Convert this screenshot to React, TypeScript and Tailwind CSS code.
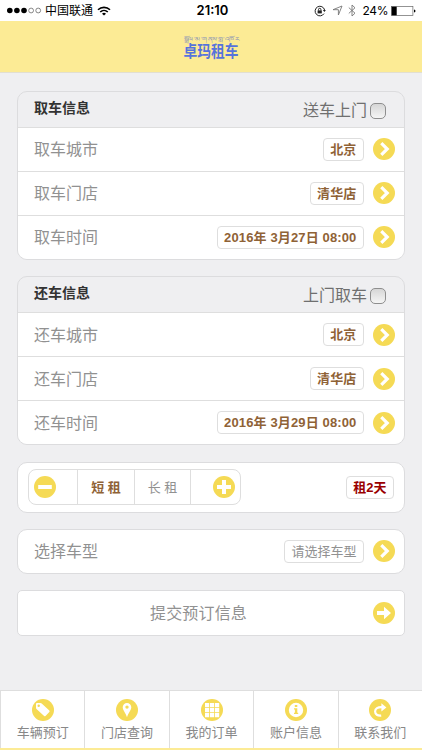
import { useState, type ReactNode } from "react";

function Badge({ children }: { children: ReactNode }) {
  return (
    <span className="h-[22px] w-[22px] shrink-0 rounded-full bg-[#f5da55]">
      <svg viewBox="0 0 22 22" className="block h-full w-full" fill="white">
        {children}
      </svg>
    </span>
  );
}

function Chevron() {
  return (
    <Badge>
      <path d="M8.3 5.2 14.2 11l-5.9 5.8" fill="none" stroke="white" strokeWidth="3.2" />
    </Badge>
  );
}

function Pill({ children, className }: { children: ReactNode; className: string }) {
  return (
    <span
      className={`flex h-[23px] items-center whitespace-pre rounded border border-[#dedede] px-[6.5px] text-[13px] leading-none ${className}`}
    >
      {children}
    </span>
  );
}

type Row = { label: string; value: string };

function Section({
  title,
  option,
  rows,
  className,
}: {
  title: string;
  option: string;
  rows: Row[];
  className: string;
}) {
  const [checked, setChecked] = useState(false);

  return (
    <section
      className={`h-[169px] shrink-0 overflow-hidden rounded-[10px] border border-[#dcdcde] bg-[#efeff1] ${className}`}
    >
      <header className="flex h-[35px] items-center justify-between pl-4 pr-[18px]">
        <h2 className="pb-[2px] text-[14px] font-bold text-[#333]">{title}</h2>
        <label className="flex items-center gap-[3px] pt-[2px] text-[16px] text-[#6f6f6f]">
          {option}
          <input
            type="checkbox"
            checked={checked}
            onChange={() => setChecked(!checked)}
            className="h-4 w-4 appearance-none rounded-[5px] border border-[#8e8e8e] bg-linear-to-b from-[#d6d6d6] to-[#f5f5f5]"
          />
        </label>
      </header>
      {rows.map((row) => (
        <div
          key={row.label}
          className="flex h-11 items-center border-t border-[#dedede] bg-white pb-[.5px] pl-4 pr-[9px]"
        >
          <span className="flex-1 pt-[2px] text-[16px] text-[#919191]">{row.label}</span>
          <Pill className="mr-[9px] font-bold tracking-[.14px] text-[#8f6236]">{row.value}</Pill>
          <Chevron />
        </div>
      ))}
    </section>
  );
}

function StatusBar() {
  return (
    <div className="flex h-[21px] items-center bg-white text-black">
      <div className="flex flex-1 items-center pl-[7px]">
        <svg viewBox="0 0 35 7" className="h-[7px] w-[35px]">
          <circle cx="2.8" cy="3.5" r="2.8" />
          <circle cx="9.9" cy="3.5" r="2.8" />
          <circle cx="17" cy="3.5" r="2.8" />
          <circle cx="24.1" cy="3.5" r="2.4" fill="none" stroke="#555" strokeWidth=".7" />
          <circle cx="31.2" cy="3.5" r="2.4" fill="none" stroke="#555" strokeWidth=".7" />
        </svg>
        <span className="ml-[3px] text-[12px]">中国联通</span>
        <svg viewBox="0 0 14 10" className="ml-1 h-[10px] w-[14px]" fill="none" stroke="black" strokeWidth="1.6">
          <path d="M1 3.8a8.6 8.6 0 0 1 12 0M3.2 6a5.5 5.5 0 0 1 7.6 0" />
          <path d="M7 9.6 5 7.7a3 3 0 0 1 4 0z" fill="black" stroke="none" />
        </svg>
      </div>
      <span className="relative left-px font-[Inter] text-[13px] font-semibold leading-none">21:10</span>
      <div className="flex flex-1 items-center justify-end pr-[6px]">
        <svg viewBox="0 0 12 12" className="h-3 w-3" fill="none" stroke="#222" strokeWidth="1">
          <path d="M10.6 5a4.8 4.8 0 1 0-.6 3.6" />
          <path d="M8.9 5h3l-1.5 2z" fill="#222" stroke="none" />
          <path d="M3.6 5.4h4.2v3H3.6z" fill="#222" stroke="none" />
          <path d="M4.5 5.5v-1a1.2 1.2 0 0 1 2.4 0v1" />
        </svg>
        <svg viewBox="0 0 11 11" className="ml-[6px] h-[11px] w-[11px]" fill="none" stroke="#777" strokeWidth=".9">
          <path d="M10 1 6.4 10V4.7H1z" strokeLinejoin="round" />
        </svg>
        <svg viewBox="0 0 8 13" className="ml-[5px] h-[13px] w-2" fill="none" stroke="#777" strokeWidth=".9">
          <path d="m.8 3.6 6.2 5.6L4 12V1l3 2.8L.8 9.4" />
        </svg>
        <span className="ml-[7px] font-[Inter] text-[12px] leading-none tracking-[-.4px]">24%</span>
        <svg viewBox="0 0 25 10" className="ml-[3px] h-[10px] w-[25px]">
          <rect x=".5" y=".5" width="21.4" height="9" fill="white" stroke="#666" strokeWidth=".7" />
          <rect x=".7" y=".7" width="5" height="8.6" />
          <path d="M23 3.4q1.5.3 1.5 1.6T23 6.6z" />
        </svg>
      </div>
    </div>
  );
}

function Logo() {
  return (
    <div className="flex w-[56px] flex-col items-center text-[#5673dc]">
      <span className="h-[5px] scale-x-[1.4] whitespace-nowrap text-[5px] leading-[5px] text-[#7f8cb8]">
        སྒྲོལ་མ་གནས་གླ་འཁོར
      </span>
      <span className="scale-y-[1.2] pt-px text-[13.7px] font-bold leading-[18px]">卓玛租车</span>
    </div>
  );
}

const tabs: { label: string; icon: ReactNode }[] = [
  {
    label: "车辆预订",
    icon: (
      <>
        <path d="M4 5.1q0-1 1-1h3.5q.7 0 1.2.5l7.6 6.9q.7.7 0 1.4l-3.8 4q-.7.7-1.4 0L4.5 10q-.5-.5-.5-1.2z" />
        <circle cx="6.7" cy="6.8" r="1.2" fill="#f5da55" />
      </>
    ),
  },
  {
    label: "门店查询",
    icon: (
      <>
        <path d="M11 3.9a4.3 4.3 0 0 1 4.3 4.3C15.3 11 12.2 14 11 18.2 9.8 14 6.7 11 6.7 8.2A4.3 4.3 0 0 1 11 3.9z" />
        <circle cx="11" cy="8.1" r="1.7" fill="#f5da55" />
      </>
    ),
  },
  {
    label: "我的订单",
    icon: (
      <path d="M4 4h4.2v4.2H4zM9 4h4.2v4.2H9zM14 4h4.2v4.2H14zM4 9h4.2v4.2H4zM9 9h4.2v4.2H9zM14 9h4.2v4.2H14zM4 14h4.2v4.2H4zM9 14h4.2v4.2H9zM14 14h4.2v4.2H14z" />
    ),
  },
  {
    label: "账户信息",
    icon: (
      <>
        <circle cx="11" cy="11" r="7.2" />
        <path d="M9.8 6h2.5v2H9.8zM9 9.2h3.3v4.6h.9v1.3H9v-1.3h.9v-3.300H9z" fill="#f5da55" />
      </>
    ),
  },
  {
    label: "联系我们",
    icon: (
      <>
        <path d="M12.2 16.6c-3.6.4-6.1-1.3-6.1-4 0-3 2.7-4.7 7-4.5" fill="none" stroke="white" strokeWidth="2.2" />
        <path d="m12.4 4.3 5 4.1-5 4.1z" />
      </>
    ),
  },
];

const pickup: Row[] = [
  { label: "取车城市", value: "北京" },
  { label: "取车门店", value: "清华店" },
  { label: "取车时间", value: "2016年 3月27日 08:00" },
];

const giveBack: Row[] = [
  { label: "还车城市", value: "北京" },
  { label: "还车门店", value: "清华店" },
  { label: "还车时间", value: "2016年 3月29日 08:00" },
];

export default function App() {
  const [term, setTerm] = useState<"short" | "long">("short");

  return (
    <div className="flex h-[750px] w-[422px] flex-col overflow-hidden bg-[#efeff1] font-['Liberation_Sans','Noto_Sans_CJK_SC',sans-serif]">
      <StatusBar />
      <header className="flex h-[52px] justify-center border-b border-[#e2dfd0] bg-[#fceb95] pt-4">
        <Logo />
      </header>

      <main className="flex flex-1 flex-col px-[17px] pt-[18px]">
        <Section title="取车信息" option="送车上门" rows={pickup} className="" />
        <Section title="还车信息" option="上门取车" rows={giveBack} className="mt-[16.4px]" />

        <div className="mt-[16.6px] flex h-[51px] items-center justify-between rounded-[10px] border border-[#dcdcde] bg-white px-[10px]">
          <div className="flex h-9 w-[213px] overflow-hidden rounded-lg border border-[#dedede] text-[13px]">
            <button className="flex w-[49px] items-center border-r border-[#dedede] pl-[5px]">
              <Badge>
                <path d="M4.2 9h13.6v4H4.2z" />
              </Badge>
            </button>
            <button
              onClick={() => setTerm("short")}
              className={`w-[57px] whitespace-pre border-r border-[#dedede] ${term === "short" ? "font-bold text-[#8f6236]" : "text-[#919191]"}`}
            >
              短 租
            </button>
            <button
              onClick={() => setTerm("long")}
              className={`w-[56px] whitespace-pre border-r border-[#dedede] ${term === "long" ? "font-bold text-[#8f6236]" : "text-[#919191]"}`}
            >
              长 租
            </button>
            <button className="flex flex-1 items-center justify-end pr-[5px]">
              <Badge>
                <path d="M9 4h4v5h5v4h-5v5H9v-5H4V9h5z" />
              </Badge>
            </button>
          </div>
          <Pill className="font-bold text-[#9a0000]">租2天</Pill>
        </div>

        <div className="mt-4 flex h-[45px] items-center rounded-[10px] border border-[#dcdcde] bg-white pl-4 pr-[9px]">
          <span className="flex-1 pt-px text-[16px] text-[#919191]">选择车型</span>
          <Pill className="mr-[9px] text-[#919191]">请选择车型</Pill>
          <Chevron />
        </div>

        <button className="mt-4 flex h-[46px] items-center rounded-[5px] border border-[#dcdcde] bg-white pr-[9px]">
          <span className="flex-1 pl-[6px] pt-[3px] text-[16px] tracking-[.16px] text-[#919191]">提交预订信息</span>
          <Badge>
            <path d="M4 9h7V4.8l7 6.2-7 6.2V13H4z" />
          </Badge>
        </button>
      </main>

      <nav className="flex h-[60px] border-b-2 border-t border-b-[#fceb95] border-t-[#dedede] bg-white">
        {tabs.map((tab) => (
          <a
            key={tab.label}
            href="#"
            className="flex flex-1 flex-col items-center border-l border-[#dedede] pt-[8px] text-[13px] leading-[23px] text-[#888]"
          >
            <Badge>{tab.icon}</Badge>
            {tab.label}
          </a>
        ))}
      </nav>
    </div>
  );
}
